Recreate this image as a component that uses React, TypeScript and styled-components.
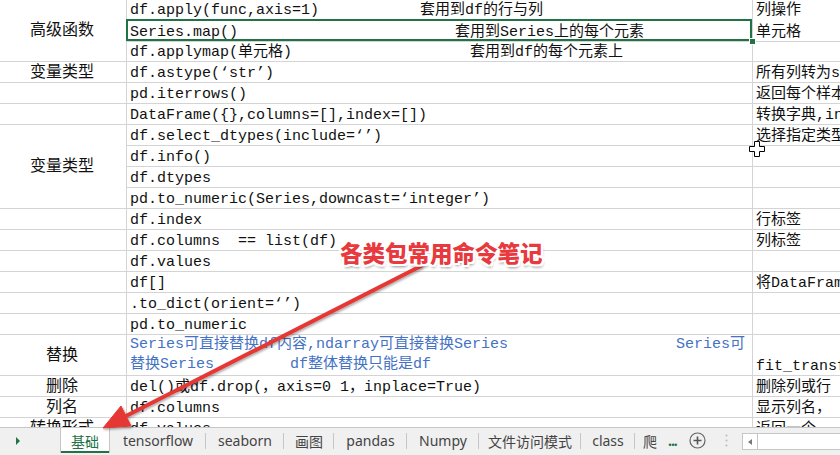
import styled, { createGlobalStyle } from "styled-components";

const GlobalStyle = createGlobalStyle`
  html, body {
    margin: 0;
    padding: 0;
    background: #ffffff;
  }
  body {
    width: 840px;
    height: 455px;
    overflow: hidden;
  }
`;

const GRID = "#d4d4d4";
const GREEN = "#217346";

// row heights taken from the sheet (bottom gridline included)
const rowHeights = [20, 22, 20, 21, 21, 21, 21, 21, 21, 21, 21, 21, 21, 21, 21, 21, 41, 21, 21, 21];

const Page = styled.div`
  position: relative;
  width: 840px;
  height: 455px;
  display: flex;
  flex-direction: column;
  overflow: hidden;
  background: #fff;
`;

const Sheet = styled.div`
  flex: 0 0 427px;
  overflow: hidden;
  display: grid;
  grid-template-columns: 127px 626px 320px;
  grid-template-rows: ${rowHeights.map((h) => `${h}px`).join(" ")};
  align-content: start;
  font-family: "Liberation Mono", "Noto Sans CJK SC", monospace;
  font-size: 15px;
  color: #111;
`;

const BaseCell = styled.div<{ $row: number; $span?: number }>`
  box-sizing: border-box;
  grid-row: ${(p) => p.$row + 1} / span ${(p) => p.$span ?? 1};
  border-right: 1px solid ${GRID};
  border-bottom: 1px solid ${GRID};
  white-space: pre;
  line-height: 17px;
`;

const LabelCell = styled(BaseCell)`
  grid-column: 1;
  display: flex;
  align-items: center;
  justify-content: center;
  padding: 2px 2px 0 0;
  font-size: 16px;
`;

const CodeCell = styled(BaseCell)<{ $selected?: boolean }>`
  grid-column: 2;
  position: relative;
  display: grid;
  align-items: end;
  padding: 0 3px 0 3px;
  z-index: ${(p) => (p.$selected ? 2 : 1)};
  & > * {
    grid-area: 1 / 1;
  }
  ${(p) =>
    p.$selected &&
    `
    &::after {
      content: "";
      position: absolute;
      top: -1px;
      left: -1px;
      right: 0;
      bottom: 0;
      border: 2px solid ${GREEN};
    }
    &::before {
      content: "";
      position: absolute;
      right: -4px;
      bottom: -4px;
      width: 5px;
      height: 5px;
      background: ${GREEN};
      border: 1px solid #fff;
      z-index: 3;
    }
  `}
`;

const Code = styled.span``;

const Note = styled.span<{ $at: number }>`
  margin-left: ${(p) => p.$at}px;
`;

const BlueBlock = styled(BaseCell)`
  grid-column: 2;
  display: flex;
  flex-direction: column;
  justify-content: flex-end;
  padding: 0 3px;
  color: #4472c4;
`;

const BlueLine = styled.div`
  display: grid;
  line-height: 20px;
  & > * {
    grid-area: 1 / 1;
  }
`;

const NoteCell = styled(BaseCell)<{ $flush?: boolean }>`
  grid-column: 3;
  border-right: none;
  display: flex;
  align-items: flex-end;
  padding: 0 3px;
  overflow: hidden;
  ${(p) => p.$flush && "border-bottom-color: transparent;"}
`;

const TabBar = styled.div`
  box-sizing: border-box;
  flex: 1;
  display: flex;
  align-items: flex-start;
  background: #f0f0f0;
  border-top: 1px solid #c6c6c6;
  font-family: "Noto Sans", "Noto Sans CJK SC", sans-serif;
  font-size: 14px;
  color: #444;
`;

const NavBox = styled.div`
  width: 60px;
  height: 25px;
  display: flex;
  align-items: center;
  padding-left: 16px;
  box-sizing: border-box;
`;

const NavTriangle = styled.span`
  width: 0;
  height: 0;
  border-top: 4px solid transparent;
  border-bottom: 4px solid transparent;
  border-left: 4px solid ${GREEN};
`;

const Tab = styled.div<{ $w: number; $active?: boolean; $sep?: boolean }>`
  box-sizing: border-box;
  position: relative;
  width: ${(p) => p.$w}px;
  height: 25px;
  display: flex;
  align-items: center;
  justify-content: center;
  white-space: nowrap;
  color: ${(p) => (p.$active ? GREEN : "#444")};
  background: ${(p) => (p.$active ? "#ffffff" : "transparent")};
  ${(p) =>
    p.$active &&
    `
    border-left: 1px solid #c6c6c6;
    border-right: 1px solid #c6c6c6;
    box-shadow: inset 0 -2px 0 ${GREEN};
  `}
  ${(p) =>
    p.$sep &&
    `
    &::after {
      content: "";
      position: absolute;
      right: 0;
      top: 5px;
      bottom: 4px;
      width: 1px;
      background: #c6c6c6;
    }
  `}
`;

const More = styled.span`
  height: 25px;
  display: flex;
  align-items: center;
  margin-left: 3px;
  color: ${GREEN};
  font-weight: 700;
  letter-spacing: -1px;
`;

const IconSlot = styled.div<{ $w: number }>`
  width: ${(p) => p.$w}px;
  height: 25px;
  display: flex;
  align-items: center;
  justify-content: center;
`;

const Scroll = styled.div`
  box-sizing: border-box;
  margin: 5px 0 0 7px;
  flex: 1;
  height: 17px;
  display: flex;
  background: #fff;
  border: 1px solid #c6c6c6;
  border-right: none;
`;

const ScrollBtn = styled.div`
  width: 14px;
  display: flex;
  align-items: center;
  justify-content: center;
  border-right: 1px solid #c6c6c6;
`;

const ScrollArrow = styled.span`
  width: 0;
  height: 0;
  border-top: 3px solid transparent;
  border-bottom: 3px solid transparent;
  border-right: 4px solid #777;
`;

const Callout = styled.div`
  position: absolute;
  left: 340px;
  top: 241px;
  z-index: 10;
  font-family: "Noto Sans CJK SC", sans-serif;
  font-weight: 900;
  font-size: 22.5px;
  line-height: 1;
  color: #e83a3e;
  white-space: nowrap;
  text-shadow:
    -2px 0 0 #fff, 2px 0 0 #fff, 0 -2px 0 #fff, 0 2px 0 #fff,
    -2px -2px 0 #fff, 2px 2px 0 #fff, -2px 2px 0 #fff, 2px -2px 0 #fff,
    1px 3px 3px rgba(0, 0, 0, 0.45);
`;

const Overlay = styled.svg`
  position: absolute;
  left: 0;
  top: 0;
  z-index: 9;
  pointer-events: none;
`;

const Cursor = styled.svg`
  position: absolute;
  left: 749px;
  top: 141px;
  z-index: 8;
`;

const labels = [
  { row: 0, span: 3, text: "高级函数" },
  { row: 3, text: "变量类型" },
  { row: 4 },
  { row: 5 },
  { row: 6, span: 4, text: "变量类型" },
  { row: 10 },
  { row: 11 },
  { row: 12 },
  { row: 13 },
  { row: 14 },
  { row: 15 },
  { row: 16, text: "替换" },
  { row: 17, text: "删除" },
  { row: 18, text: "列名" },
  { row: 19, text: "转换形式" },
];

const codes: { row: number; code: string; note?: string; at?: number }[] = [
  { row: 0, code: "df.apply(func,axis=1)", note: "套用到df的行与列", at: 290 },
  { row: 1, code: "Series.map()", note: "套用到Series上的每个元素", at: 325 },
  { row: 2, code: "df.applymap(单元格)", note: "套用到df的每个元素上", at: 340 },
  { row: 3, code: "df.astype(‘str’)" },
  { row: 4, code: "pd.iterrows()" },
  { row: 5, code: "DataFrame({},columns=[],index=[])" },
  { row: 6, code: "df.select_dtypes(include=‘’)" },
  { row: 7, code: "df.info()" },
  { row: 8, code: "df.dtypes" },
  { row: 9, code: "pd.to_numeric(Series,downcast=‘integer’)" },
  { row: 10, code: "df.index" },
  { row: 11, code: "df.columns  == list(df)" },
  { row: 12, code: "df.values" },
  { row: 13, code: "df[]" },
  { row: 14, code: ".to_dict(orient=‘’)" },
  { row: 15, code: "pd.to_numeric" },
  { row: 17, code: "del()或df.drop(，axis=0 1，inplace=True)" },
  { row: 18, code: "df.columns" },
  { row: 19, code: "df.values" },
];

const notes: Record<number, string> = {
  0: "列操作",
  1: "单元格",
  3: "所有列转为str",
  4: "返回每个样本",
  5: "转换字典,index为行",
  6: "选择指定类型的列",
  10: "行标签",
  11: "列标签",
  13: "将DataFrame转为字典",
  16: "fit_transform",
  17: "删除列或行",
  18: "显示列名，",
  19: "返回一个",
};

const tabs = [
  { name: "tensorflow", w: 96, sep: true },
  { name: "seaborn", w: 78, sep: true },
  { name: "画图", w: 50, sep: true },
  { name: "pandas", w: 73, sep: true },
  { name: "Numpy", w: 72, sep: true },
  { name: "文件访问模式", w: 102, sep: true },
  { name: "class", w: 54, sep: true },
  { name: "爬", w: 30 },
];

const App = () => {
  return (
    <>
      <GlobalStyle />
      <Page>
        <Sheet>
          {labels.map((l) => (
            <LabelCell key={`a${l.row}`} $row={l.row} $span={l.span}>
              {l.text}
            </LabelCell>
          ))}
          {codes.map((c) => (
            <CodeCell key={`b${c.row}`} $row={c.row} $selected={c.row === 1}>
              <Code>{c.code}</Code>
              {c.note && <Note $at={c.at ?? 0}>{c.note}</Note>}
            </CodeCell>
          ))}
          <BlueBlock $row={16}>
            <BlueLine>
              <Code>Series可直接替换df内容,ndarray可直接替换Series</Code>
              <Note $at={546}>Series可</Note>
            </BlueLine>
            <BlueLine>
              <Code>替换Series</Code>
              <Note $at={160}>df整体替换只能是df</Note>
            </BlueLine>
          </BlueBlock>
          {rowHeights.map((_, i) => (
            <NoteCell key={`c${i}`} $row={i} $flush={i === 0}>
              {notes[i] ?? ""}
            </NoteCell>
          ))}
        </Sheet>

        <TabBar>
          <NavBox>
            <NavTriangle />
          </NavBox>
          <Tab $w={50} $active>
            基础
          </Tab>
          {tabs.map((t) => (
            <Tab key={t.name} $w={t.w} $sep={t.sep}>
              {t.name}
            </Tab>
          ))}
          <More>...</More>
          <IconSlot $w={42}>
            <svg width="17" height="17" viewBox="0 0 17 17">
              <circle cx="8.5" cy="8.5" r="7.5" fill="none" stroke="#666" strokeWidth="1.2" />
              <path d="M8.5 4.5v8M4.5 8.5h8" stroke="#555" strokeWidth="1.6" />
            </svg>
          </IconSlot>
          <IconSlot $w={16}>
            <svg width="3" height="13" viewBox="0 0 3 13">
              <circle cx="1.5" cy="1.5" r="1" fill="#bbb" />
              <circle cx="1.5" cy="6.5" r="1" fill="#bbb" />
              <circle cx="1.5" cy="11.5" r="1" fill="#bbb" />
            </svg>
          </IconSlot>
          <Scroll>
            <ScrollBtn>
              <ScrollArrow />
            </ScrollBtn>
          </Scroll>
        </TabBar>

        <Cursor width="16" height="16" viewBox="0 0 16 16">
          <path
            d="M5.5 0.5h5v5h5v5h-5v5h-5v-5h-5v-5h5z"
            fill="#fff"
            stroke="#000"
            strokeWidth="1"
          />
        </Cursor>

        <Callout>各类包常用命令笔记</Callout>

        <Overlay width="840" height="455" viewBox="0 0 840 455">
          <defs>
            <filter id="sh" x="-10%" y="-10%" width="120%" height="120%">
              <feDropShadow dx="1" dy="1.5" stdDeviation="1" floodColor="#000" floodOpacity="0.35" />
            </filter>
          </defs>
          <g filter="url(#sh)" fill="#e53935" stroke="#e53935">
            <line x1="421" y1="266" x2="124" y2="417" strokeWidth="4" strokeLinecap="round" />
            <polygon points="103,428 131,426 121,406" strokeWidth="1" strokeLinejoin="round" />
          </g>
        </Overlay>
      </Page>
    </>
  );
};

export default App;
